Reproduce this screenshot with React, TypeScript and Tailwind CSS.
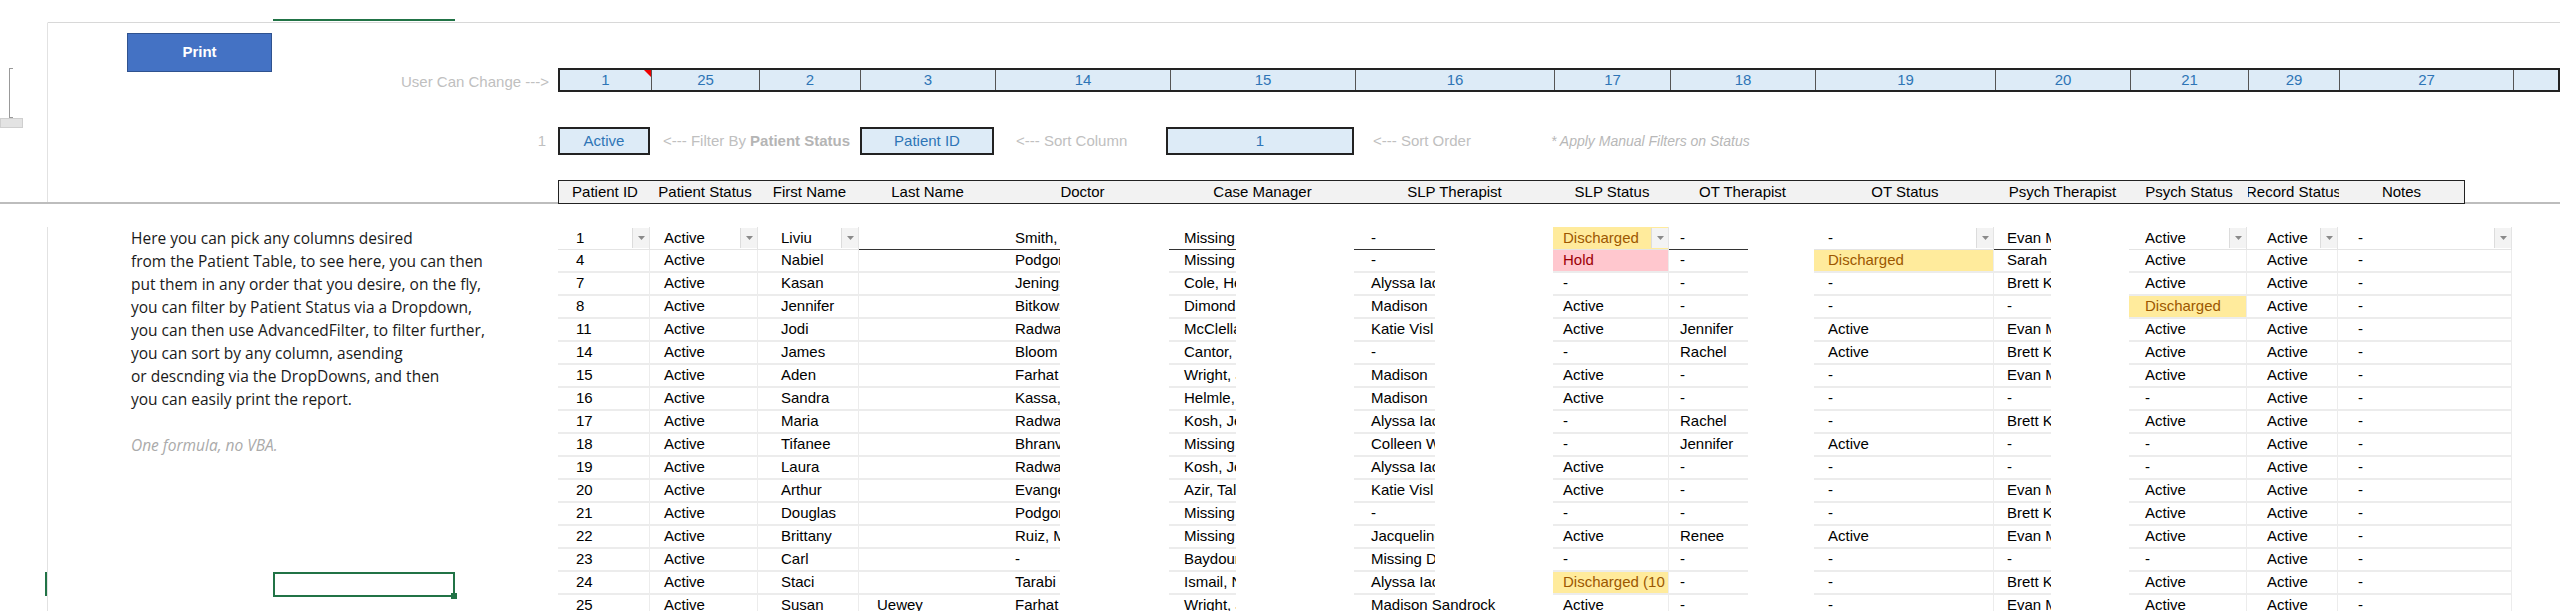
import React from "react";

type Col = { w: number; pad: number; clip?: number };
const cols: Col[] = [
  { w: 92, pad: 18 },
  { w: 108, pad: 14 },
  { w: 101, pad: 23 },
  { w: 135, pad: 18, clip: 135 },
  { w: 175, pad: 21, clip: 66 },
  { w: 185, pad: 15, clip: 67 },
  { w: 199, pad: 17, clip: 81 },
  { w: 116, pad: 10 },
  { w: 145, pad: 11, clip: 79 },
  { w: 180, pad: 14 },
  { w: 135, pad: 13, clip: 57 },
  { w: 118, pad: 16 },
  { w: 91, pad: 20 },
  { w: 174, pad: 20 },
];

const nums = ["1", "25", "2", "3", "14", "15", "16", "17", "18", "19", "20", "21", "29", "27"];
const heads = ["Patient ID", "Patient Status", "First Name", "Last Name", "Doctor", "Case Manager", "SLP Therapist", "SLP Status", "OT Therapist", "OT Status", "Psych Therapist", "Psych Status", "Record Status", "Notes"];

const rows: string[][] = [
  ["1", "Active", "Liviu", "", "Smith, John", "Missing", "-", "Y:Discharged", "-", "-", "Evan M", "Active", "Active", "-"],
  ["4", "Active", "Nabiel", "", "Podgorski", "Missing", "-", "P:Hold", "-", "Y:Discharged", "Sarah", "Active", "Active", "-"],
  ["7", "Active", "Kasan", "", "Jenings", "Cole, Helen", "Alyssa Iaco", "-", "-", "-", "Brett K", "Active", "Active", "-"],
  ["8", "Active", "Jennifer", "", "Bitkowski", "Dimond", "Madison", "Active", "-", "-", "-", "Y:Discharged", "Active", "-"],
  ["11", "Active", "Jodi", "", "Radwan", "McClelland", "Katie Visl", "Active", "Jennifer", "Active", "Evan M", "Active", "Active", "-"],
  ["14", "Active", "James", "", "Bloom", "Cantor, J", "-", "-", "Rachel", "Active", "Brett K", "Active", "Active", "-"],
  ["15", "Active", "Aden", "", "Farhat", "Wright, J", "Madison", "Active", "-", "-", "Evan M", "Active", "Active", "-"],
  ["16", "Active", "Sandra", "", "Kassa, R", "Helmle, K", "Madison", "Active", "-", "-", "-", "-", "Active", "-"],
  ["17", "Active", "Maria", "", "Radwan", "Kosh, Jen", "Alyssa Iaco", "-", "Rachel", "-", "Brett K", "Active", "Active", "-"],
  ["18", "Active", "Tifanee", "", "Bhranv", "Missing", "Colleen W", "-", "Jennifer", "Active", "-", "-", "Active", "-"],
  ["19", "Active", "Laura", "", "Radwan", "Kosh, Jen", "Alyssa Iaco", "Active", "-", "-", "-", "-", "Active", "-"],
  ["20", "Active", "Arthur", "", "Evangel", "Azir, Tal", "Katie Visl", "Active", "-", "-", "Evan M", "Active", "Active", "-"],
  ["21", "Active", "Douglas", "", "Podgorski", "Missing", "-", "-", "-", "-", "Brett K", "Active", "Active", "-"],
  ["22", "Active", "Brittany", "", "Ruiz, M", "Missing", "Jacqueline", "Active", "Renee", "Active", "Evan M", "Active", "Active", "-"],
  ["23", "Active", "Carl", "", "-", "Baydoun", "Missing D", "-", "-", "-", "-", "-", "Active", "-"],
  ["24", "Active", "Staci", "", "Tarabi", "Ismail, N", "Alyssa Iaco", "Y:Discharged (10", "-", "-", "Brett K", "Active", "Active", "-"],
  ["25", "Active", "Susan", "Uewey", "Farhat", "Wright, J", "Madison Sandrock", "Active", "-", "-", "Evan M", "Active", "Active", "-"],
];

const arrowCols = [0, 1, 2, 7, 9, 11, 12, 13];

const para = [
  "Here you can pick any columns desired",
  "from the Patient Table, to see here, you can then",
  "put them in any order that you desire, on the fly,",
  "you can filter by Patient Status via a Dropdown,",
  "you can then use AdvancedFilter, to filter further,",
  "you can sort by any column, asending",
  "or descnding via the DropDowns, and then",
  "you can easily print the report.",
];

function Arrow() {
  return (
    <div className="w-[17px] h-[20px] bg-[#f3f3f3] border-l border-[#dcdcdc] flex items-center justify-center shrink-0">
      <svg width="7" height="4" viewBox="0 0 7 4"><path d="M0 0h7L3.5 4z" fill="#8a8a8a" /></svg>
    </div>
  );
}

function Cell({ c, v, i, first, last }: { c: Col; v: string; i: number; first: boolean; last: boolean }) {
  let bg = "";
  let color = "text-black";
  let txt = v;
  if (v.startsWith("Y:")) { bg = "bg-[#ffeb9c]"; color = "text-[#9c5700]"; txt = v.slice(2); }
  if (v.startsWith("P:")) { bg = "bg-[#ffc7ce]"; color = "text-[#9c0006]"; txt = v.slice(2); }
  const clipW = last && i === 6 ? 160 : c.clip ?? c.w;
  return (
    <div className="h-[23px] shrink-0 flex" style={{ width: c.w }}>
      <div
        className={`h-full flex items-center overflow-hidden whitespace-nowrap ${first ? "border-b border-[#333]" : "border-b-2 border-[#ececec]"} ${c.clip ? "" : "border-r border-[#e4e4e4]"} ${bg} ${color}`}
        style={{ width: clipW }}
      >
        <span className="flex-1 overflow-hidden" style={{ paddingLeft: c.pad }}>{txt}</span>
        {first && arrowCols.includes(i) && <Arrow />}
      </div>
    </div>
  );
}

export default function App() {
  return (
    <div className="w-[2560px] h-[611px] overflow-hidden bg-white relative" style={{ fontFamily: "'Liberation Sans', Arial, sans-serif" }}>
      <div className="h-[22px] flex">
        <div className="w-[273px]" />
        <div className="w-[182px] h-[21px] border-b-2 border-[#217346]" />
      </div>
      <div className="flex h-[158px]">
        <div className="w-[48px] shrink-0 border-r border-[#e2e2e2] border-t border-t-transparent">
          <div className="ml-[9px] mt-[45px] w-[4px] h-[50px] border-l border-t border-b border-[#999]" />
          <div className="w-[23px] h-[10px] bg-[#e3e3e3] border border-[#cfcfcf]" />
        </div>
        <div className="flex-1 border-t border-[#d8d8d8]">
          <div className="flex items-start h-[69px]">
            <div className="w-[510px] shrink-0 flex flex-col">
              <div className="ml-[79px] mt-[10px] w-[145px] h-[39px] bg-[#4472c4] border border-[#2f528f] flex items-center justify-center text-white font-bold text-[15px]">Print</div>
              <div className="h-[20px] text-right pr-[9px] text-[#c0c0c0] text-[15px] leading-[20px]">User Can Change ---&gt;</div>
            </div>
            <div className="mt-[45px] flex-1 h-[24px] flex border-2 border-[#222] bg-[#ddebf7] text-[#2e75b6] text-[15px]">
              {nums.map((n, i) => (
                <div key={i} className="relative shrink-0 flex items-center justify-center border-r border-[#555]" style={{ width: cols[i].w }}>
                  {n}
                  {i === 0 && <div className="absolute top-0 right-0 w-0 h-0 border-l-[7px] border-l-transparent border-t-[7px] border-t-[#e00]" />}
                </div>
              ))}
              <div className="flex-1" />
            </div>
          </div>
          <div className="flex items-center mt-[35px] h-[28px] text-[15px]">
            <div className="w-[510px] shrink-0 text-right pr-[12px] text-[#bfbfbf]">1</div>
            <div className="w-[92px] h-[28px] border-2 border-[#222] bg-[#ddebf7] text-[#2e75b6] flex items-center justify-center">Active</div>
            <div className="w-[210px] pl-[13px] text-[#c0c0c0] whitespace-nowrap">&lt;--- Filter By <span className="font-bold text-[#b5b5b5]">Patient Status</span></div>
            <div className="w-[134px] h-[28px] border-2 border-[#222] bg-[#ddebf7] text-[#2e75b6] flex items-center justify-center">Patient ID</div>
            <div className="w-[172px] pl-[22px] text-[#c0c0c0]">&lt;--- Sort Column</div>
            <div className="w-[188px] h-[28px] border-2 border-[#222] bg-[#ddebf7] text-[#2e75b6] flex items-center justify-center">1</div>
            <div className="w-[197px] pl-[19px] text-[#c0c0c0]">&lt;--- Sort Order</div>
            <div className="italic text-[#b8b8b8] text-[14px]">* Apply Manual Filters on Status</div>
          </div>
        </div>
      </div>
      <div className="flex h-[24px] border-b-2 border-[#bdbdbd]">
        <div className="w-[48px] shrink-0 border-r border-[#e2e2e2]" />
        <div className="w-[510px] shrink-0" />
        <div className="flex h-[24px] border border-[#222] bg-[#f2f2f2] text-[15px] text-black">
          {heads.map((h, i) => (
            <div key={i} className="shrink-0 flex items-center justify-center whitespace-nowrap overflow-hidden" style={{ width: i === 13 ? 125 : cols[i].w }}>{h}</div>
          ))}
        </div>
      </div>
      <div className="flex mt-[23px]">
        <div className="w-[48px] shrink-0 border-r border-[#e2e2e2] h-[400px] flex flex-col">
          <div className="h-[345px]" />
          <div className="h-[24px] w-[47px] border-r-2 border-[#217346]" />
        </div>
        <div className="w-[510px] shrink-0 flex flex-col text-[#1a1a1a]" style={{ fontFamily: "'Open Sans', 'Noto Sans', sans-serif" }}>
          {para.map((p, i) => (
            <div key={i} className="h-[23px] leading-[23px] pl-[83px] whitespace-nowrap text-[15.5px]">{p}</div>
          ))}
          <div className="h-[23px]" />
          <div className="h-[23px] leading-[23px] pl-[83px] italic text-[#aaaaaa] text-[15.5px]">One formula, no VBA.</div>
          <div className="h-[115px]" />
          <div className="ml-[225px] w-[182px] h-[25px] border-2 border-[#217346] relative">
            <div className="absolute right-[-4px] bottom-[-4px] w-[6px] h-[6px] bg-[#217346]" />
          </div>
        </div>
        <div className="flex flex-col text-[15px]">
          {rows.map((r, ri) => (
            <div key={ri} className="flex">
              {r.map((v, i) => (
                <Cell key={i} c={cols[i]} v={v} i={i} first={ri === 0} last={ri === rows.length - 1} />
              ))}
            </div>
          ))}
        </div>
      </div>
    </div>
  );
}
